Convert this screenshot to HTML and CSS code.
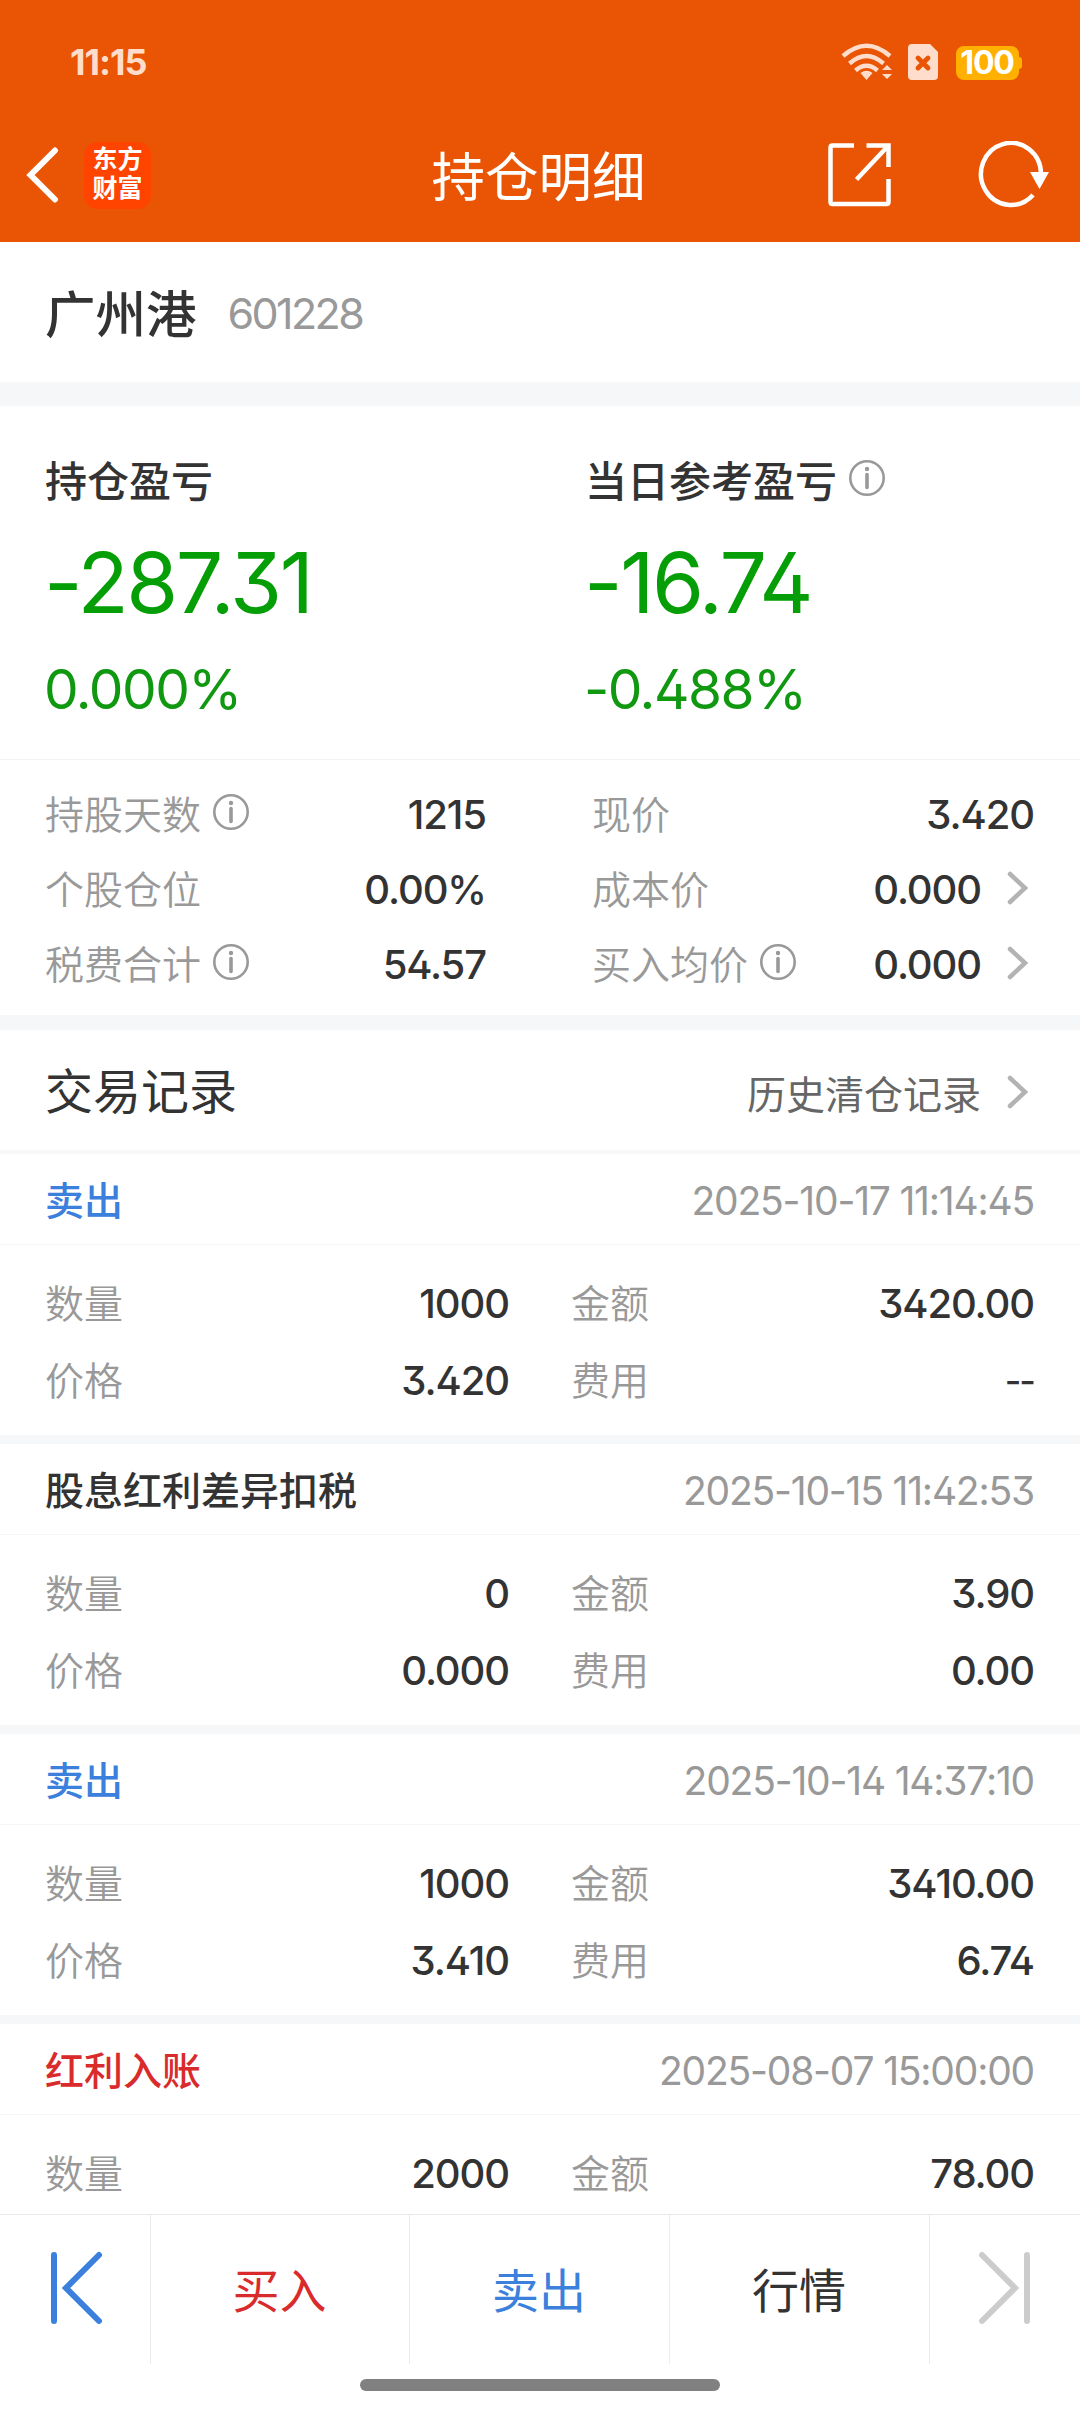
FILE: index.html
```html
<!DOCTYPE html>
<html lang="zh-CN">
<head>
<meta charset="utf-8">
<title>持仓明细</title>
<link rel="stylesheet" href="styles.css">
</head>
<body>
<svg class="defs" aria-hidden="true">
  <symbol id="info" viewBox="0 0 38 38"><circle cx="19" cy="19" r="16.7" fill="none" stroke="currentColor" stroke-width="2.6"/><circle cx="19" cy="10" r="2.2" fill="currentColor"/><path d="M19 15.500V28.500" stroke="currentColor" stroke-width="3.600" stroke-linecap="round"/></symbol>
  <symbol id="chev" viewBox="0 0 22 36"><path d="M3 4L18 18L3 32" fill="none" stroke="currentColor" stroke-width="4.5" stroke-linecap="round"/></symbol>
</svg>
<div class="screen">
  <header class="top">
    <div class="status">
      <span class="time">11:15</span>
      <svg class="status-icons" viewBox="0 0 190 50" width="190" height="50">
        <g fill="none" stroke="#ffddcc" stroke-width="4.4">
          <path d="M3 17Q26.500 -3.500 50 17"/>
          <path d="M9.500 24.500Q26.500 9.500 43.500 24.500"/>
          <path d="M15.500 31.500Q26.500 22 37.500 31.500"/>
        </g>
        <path d="M20.500 34Q26.500 29.500 32.500 34L26.500 41Z" fill="#ffddcc"/>
        <path d="M42 31L47 26L52 31ZM42 35H52L47 40Z" fill="#ffddcc"/>
        <path d="M72 5H90L98 13V37Q98 41 94 41H72Q68 41 68 37V9Q68 5 72 5Z" fill="#ffddcc"/>
        <path d="M78 19L88 29M88 19L78 29" stroke="#e95504" stroke-width="4.800" stroke-linecap="round"/>
        <rect x="116" y="7" width="63" height="34" rx="8" fill="#ffb000"/>
        <path d="M179 18Q182 18 182 21V27Q182 30 179 30Z" fill="#ffb000"/>
        <text class="battery-text" x="147" y="35" text-anchor="middle">100</text>
      </svg>
    </div>
    <div class="nav">
      <div class="nav-side">
        <svg width="34" height="60" viewBox="0 0 34 60"><path d="M30 5.500L5.500 30L30 54.500" fill="none" stroke="#fff" stroke-width="6" stroke-linecap="round"/></svg>
        <div class="logo"><span>东方</span><span>财富</span></div>
      </div>
      <h1>持仓明细</h1>
      <div class="nav-side nav-right">
        <svg width="66" height="66" viewBox="0 0 66 66" fill="none" stroke="#fff" stroke-width="4.500"><path d="M27 3.500H5.500Q3.500 3.500 3.500 5.500V60Q3.500 62 5.500 62H59.500Q61.500 62 61.500 60V37M39.500 3.500H61.500V25M61.500 3.500L29.500 37.500"/></svg>
        <svg width="74" height="68" viewBox="0 0 74 68"><path d="M63 33A30 31 0 1 0 55 54" fill="none" stroke="#fff" stroke-width="4.500"/><path d="M52 31H71L61.500 48Z" fill="#fff"/></svg>
      </div>
    </div>
  </header>

  <section class="stock"><span class="name">广州港</span><span class="code">601228</span></section>

  <section class="summary">
    <div class="pl"><div class="pl-title"><span>持仓盈亏</span></div><div class="amount">-287.31</div><div class="pct">0.000%</div></div>
    <div class="pl"><div class="pl-title"><span>当日参考盈亏</span><svg class="info"><use href="#info"/></svg></div><div class="amount">-16.74</div><div class="pct">-0.488%</div></div>
  </section>

  <section class="stats">
    <div class="stat-col">
      <div class="row"><span class="label">持股天数<svg class="info"><use href="#info"/></svg></span><span class="value">1215</span></div>
      <div class="row"><span class="label">个股仓位</span><span class="value">0.00%</span></div>
      <div class="row"><span class="label">税费合计<svg class="info"><use href="#info"/></svg></span><span class="value">54.57</span></div>
    </div>
    <div class="stat-col">
      <div class="row"><span class="label">现价</span><span class="value">3.420</span></div>
      <div class="row"><span class="label">成本价</span><span class="value">0.000<svg class="chev"><use href="#chev"/></svg></span></div>
      <div class="row"><span class="label">买入均价<svg class="info"><use href="#info"/></svg></span><span class="value">0.000<svg class="chev"><use href="#chev"/></svg></span></div>
    </div>
  </section>

  <section class="records-title"><h2>交易记录</h2><a class="history">历史清仓记录<svg class="chev"><use href="#chev"/></svg></a></section>

  <main class="records">
    <article class="record">
      <div class="record-head"><span class="kind sell">卖出</span><time>2025-10-17 11:14:45</time></div>
      <div class="record-body">
        <div class="row"><span class="label">数量</span><span class="value">1000</span></div><div class="row"><span class="label">金额</span><span class="value">3420.00</span></div>
        <div class="row"><span class="label">价格</span><span class="value">3.420</span></div><div class="row"><span class="label">费用</span><span class="value dashes">--</span></div>
      </div>
    </article>
    <article class="record">
      <div class="record-head"><span class="kind">股息红利差异扣税</span><time>2025-10-15 11:42:53</time></div>
      <div class="record-body">
        <div class="row"><span class="label">数量</span><span class="value">0</span></div><div class="row"><span class="label">金额</span><span class="value">3.90</span></div>
        <div class="row"><span class="label">价格</span><span class="value">0.000</span></div><div class="row"><span class="label">费用</span><span class="value">0.00</span></div>
      </div>
    </article>
    <article class="record">
      <div class="record-head"><span class="kind sell">卖出</span><time>2025-10-14 14:37:10</time></div>
      <div class="record-body">
        <div class="row"><span class="label">数量</span><span class="value">1000</span></div><div class="row"><span class="label">金额</span><span class="value">3410.00</span></div>
        <div class="row"><span class="label">价格</span><span class="value">3.410</span></div><div class="row"><span class="label">费用</span><span class="value">6.74</span></div>
      </div>
    </article>
    <article class="record">
      <div class="record-head"><span class="kind buy">红利入账</span><time>2025-08-07 15:00:00</time></div>
      <div class="record-body">
        <div class="row"><span class="label">数量</span><span class="value">2000</span></div><div class="row"><span class="label">金额</span><span class="value">78.00</span></div>
      </div>
    </article>
  </main>

  <footer class="bottom">
    <nav class="tabs">
      <a><svg width="56" height="76" viewBox="0 0 56 76" fill="none" stroke="#3a80dc" stroke-width="6" stroke-linecap="round"><path d="M7 5V71M52 5L19 38L52 71"/></svg></a>
      <a class="buy">买入</a>
      <a class="sell">卖出</a>
      <a>行情</a>
      <a><svg width="56" height="76" viewBox="0 0 56 76" fill="none" stroke="#ccc" stroke-width="6" stroke-linecap="round"><path d="M50 5V71M5 5L38 38L5 71"/></svg></a>
    </nav>
    <div class="home-bar"></div>
  </footer>
</div>
</body>
</html>
```
FILE: styles.css
```css
* { box-sizing: border-box; }
body {
  margin: 0;
  background: #fff;
  color: #333;
  font-family: Inter, "Noto Sans CJK SC", sans-serif;
  font-feature-settings: "cv09", "cv02";
}
h1, h2 { margin: 0; font-weight: 400; }
svg { display: block; flex: none; }
.defs { position: absolute; width: 0; height: 0; }
.screen { width: 1080px; height: 2412px; display: flex; flex-direction: column; overflow: hidden; }

.top { height: 242px; flex: none; background: #e95504; color: #fff; }
.status { height: 108px; padding: 17px 50px 0 70px; display: flex; align-items: center; justify-content: space-between; }
.status-icons { margin-top: 2px; }
.time { margin-top: -2px; color: #ffddcc; font-size: 36px; font-weight: 700; letter-spacing: -1px; }
.battery-text { fill: #fff; font-size: 32px; font-weight: 700; letter-spacing: -1.2px; }
.nav { height: 134px; padding: 0 28px 0 25px; display: grid; grid-template-columns: 1fr auto 1fr; align-items: center; }
.nav h1 { padding-top: 6px; font-size: 53.5px; line-height: 80px; }
.nav-side { display: flex; align-items: center; gap: 25px; }
.nav-right { justify-content: flex-end; gap: 85px; }
.logo { width: 67px; height: 67px; border-radius: 14px; background: #ff4400; display: flex; flex-direction: column; align-items: center; justify-content: center; padding-bottom: 2px; font-size: 25px; font-weight: 700; line-height: 29px; }

.stock { height: 140px; flex: none; padding: 0 45px; display: flex; align-items: center; gap: 31px; }
.name { margin-top: -2px; font-size: 50.5px; font-weight: 500; }
.code { padding-top: 2px; font-size: 43px; color: #999; font-weight: 400; letter-spacing: -2.6px; }

.summary { height: 378px; flex: none; padding: 41px 45px 0; border-top: 24px solid #f6f7f9; border-bottom: 1px solid #f3f3f3; display: grid; grid-template-columns: 540px 1fr; }
.pl-title { display: flex; align-items: center; gap: 11px; height: 62px; font-size: 42px; font-weight: 500; }
.info { width: 38px; height: 38px; color: #999; }
.amount { height: 106px; margin: 21px 0 0 -1px; line-height: 106px; font-size: 84px; letter-spacing: -2.4px; color: #069e06; }
.pct { height: 106px; margin-left: -1px; line-height: 106px; font-size: 55px; letter-spacing: -1.5px; color: #119811; }

.stats { height: 270px; flex: none; padding: 17px 46px 0 45px; border-bottom: 15px solid #f6f7f9; display: grid; grid-template-columns: 441px 442px; justify-content: space-between; }
.row { display: flex; align-items: center; justify-content: space-between; height: 75px; font-size: 39px; }
.label { display: flex; align-items: center; gap: 11px; margin-top: -6px; color: #999; font-weight: 350; }
.value { display: flex; align-items: center; gap: 26px; font-size: 40px; font-weight: 500; letter-spacing: -1.1px; }
.value .chev { margin-top: -4px; }
.dashes { letter-spacing: -2px; font-size: 36px; }
.chev { width: 22px; height: 36px; margin-right: 5px; color: #b3b3b3; }

.records-title { height: 124px; flex: none; padding: 0 46px 0 45px; border-bottom: 4px solid #f6f7f9; display: flex; align-items: center; justify-content: space-between; }
.records-title h2 { margin-top: -5px; font-size: 48px; }
.history { display: flex; align-items: center; gap: 26px; padding-top: 3px; font-size: 39px; color: #666; }

.records { flex: 1; min-height: 0; overflow: hidden; }
.record { height: 290px; border-bottom: 9px solid #f6f7f9; }
.record-head { height: 91px; padding: 0 46px 0 45px; border-bottom: 1px solid #f5f5f7; display: flex; align-items: center; justify-content: space-between; font-size: 39px; }
.kind { margin-top: -3px; font-weight: 500; }
.record time { padding-top: 2px; color: #999; font-weight: 400; letter-spacing: -1.2px; }
.record-body { padding: 20px 46px 0 45px; display: grid; grid-template-columns: 464px 463px; justify-content: space-between; }
.record-body .row { height: 77px; }
.sell { color: #3a80dc; }
.buy { color: #d92b2b; }

.bottom { height: 198px; flex: none; border-top: 1px solid #e9e9eb; background: #fff; }
.tabs { height: 149px; display: grid; grid-template-columns: 151px 259px 260px 260px 150px; }
.tabs a { display: flex; align-items: center; justify-content: center; padding: 0 1px 4px 0; border-right: 1px solid #ececee; font-size: 47px; }
.tabs a:last-child { padding-right: 0; border-right: 0; }
.home-bar { width: 360px; height: 12px; margin: 15px auto 0; border-radius: 6px; background: #808080; }
```
